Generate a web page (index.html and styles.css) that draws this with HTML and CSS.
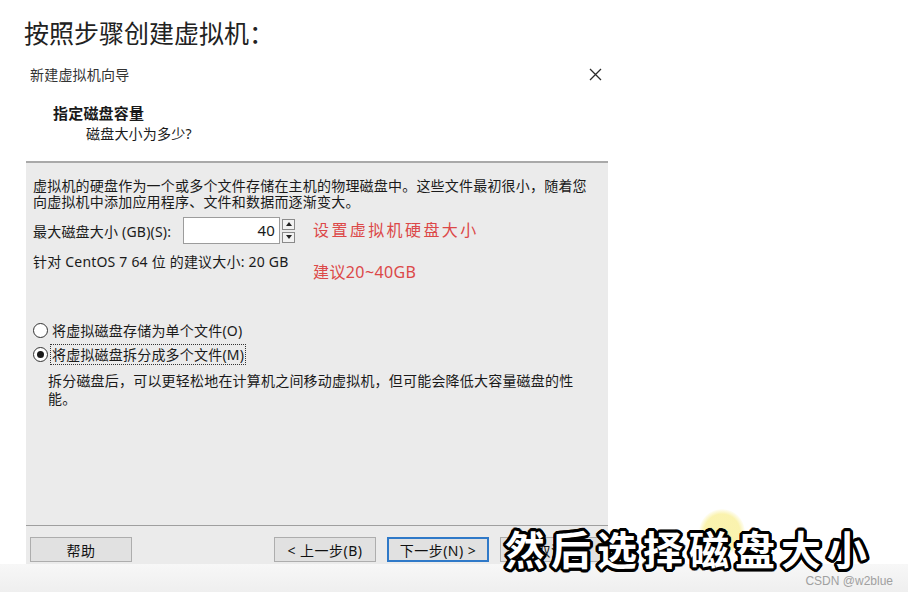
FILE: index.html
```html
<!DOCTYPE html>
<html lang="zh-CN">
    <head>
        <meta charset="utf-8">
        <link rel="stylesheet" href="styles.css">
    </head>
    <body>
        <h1 class="title">按照步骤创建虚拟机：</h1>
        <section class="dialog">
            <header class="head">
                <div class="caption">
                    <span>新建虚拟机向导</span>
                    <svg class="close" width="13" height="13" viewBox="0 0 13 13"><path d="M1 1L12 12M12 1L1 12" stroke="#2b2b2b" stroke-width="1.3" fill="none"/></svg>
                </div>
                <div class="step">指定磁盘容量</div>
                <div class="sub">磁盘大小为多少?</div>
            </header>
            <div class="body">
                <p class="desc">虚拟机的硬盘作为一个或多个文件存储在主机的物理磁盘中。这些文件最初很小，随着您</p>
                <p class="desc">向虚拟机中添加应用程序、文件和数据而逐渐变大。</p>
                <div class="size-row">
                    <label class="size-label">最大磁盘大小 (GB)(S):</label>
                    <div class="num">40</div>
                    <div class="spin">
                        <span class="up"></span>
                        <span class="down"></span>
                    </div>
                </div>
                <p class="hint">针对 CentOS 7 64 位 的建议大小: 20 GB</p>
                <div class="note note-a">设置虚拟机硬盘大小</div>
                <div class="note note-b">建议20~40GB</div>
                <div class="radio first"><span class="dot"></span><span>将虚拟磁盘存储为单个文件(O)</span></div>
                <div class="radio"><span class="dot on"></span><span class="focus">将虚拟磁盘拆分成多个文件(M)</span></div>
                <p class="split">拆分磁盘后，可以更轻松地在计算机之间移动虚拟机，但可能会降低大容量磁盘的性<br>能。</p>
            </div>
            <footer class="foot">
                <button class="btn">帮助</button>
                <div class="nav">
                    <button class="btn">&lt; 上一步(B)</button>
                    <button class="btn primary">下一步(N) &gt;</button>
                    <button class="btn">取消</button>
                </div>
            </footer>
        </section>
        <div class="strip"></div>
        <div class="glow"></div>
        <div class="subtitle">然后选择磁盘大小</div>
        <div class="mark">CSDN @w2blue</div>
    </body>
</html>
```

FILE: styles.css
```css
html,body{
    margin:0;
    padding:0;
    background:#fff;
    font-family:"Noto Sans","Noto Sans CJK SC",sans-serif;
    color:#1a1a1a;
    width:908px;
    height:593px;
    overflow:hidden;
    position:relative;
}
p{
    margin:0;
}
.title{
    margin:0;
    padding:18px 0 0 24px;
    font-family:"Noto Sans CJK SC",sans-serif;
    font-size:25px;
    line-height:28px;
    font-weight:normal;
    letter-spacing:0;
    color:#222;
}
.dialog{
    margin-left:26px;
    width:582px;
    font-size:14px;
    letter-spacing:0.2px;
}
.head{
    height:115px;
    background:#fff;
    border-bottom:2px solid #a9a9a9;
    box-sizing:content-box;
}
.caption{
    display:flex;
    justify-content:space-between;
    align-items:center;
    padding:19px 6px 0 4px;
    line-height:20px;
    color:#333;
}
.close{
    margin-top:-1px;
}
.step{
    margin-top:19px;
    padding-left:27px;
    line-height:18px;
    font-size:15px;
    font-weight:bold;
}
.sub{
    margin-top:3px;
    padding-left:60px;
    line-height:18px;
}
.body{
    position:relative;
    height:362px;
    box-sizing:border-box;
    background:#ebebeb;
    padding:15px 0 0 7px;
}
.desc{
    line-height:16px;
}
.size-row{
    display:flex;
    align-items:center;
    margin-top:7px;
    height:27px;
}
.size-label{
    width:150px;
}
.num{
    width:97px;
    height:27px;
    box-sizing:border-box;
    border:1px solid #9c9c9c;
    background:#fff;
    text-align:right;
    padding-right:4px;
    line-height:25px;
    font-size:15px;
}
.spin{
    display:flex;
    flex-direction:column;
    gap:2px;
    margin-left:2px;
    width:13px;
}
.spin span{
    height:9px;
    border:1px solid #8a8a8a;
    background:#f2f2f2;
    position:relative;
}
.spin span::after{
    content:'';
    position:absolute;
    left:3px;
    width:0;
    height:0;
    border-style:solid;
}
.spin .up::after{
    top:2px;
    border-width:0 3.5px 4px 3.5px;
    border-color:transparent transparent #222 transparent;
}
.spin .down::after{
    top:2px;
    border-width:4px 3.5px 0 3.5px;
    border-color:#222 transparent transparent transparent;
}
.hint{
    margin-top:9px;
    line-height:18px;
}
.note{
    position:absolute;
    left:287px;
    color:#dc4848;
    font-family:"Noto Sans CJK SC",sans-serif;
    font-size:16px;
    letter-spacing:2.4px;
    line-height:20px;
}
.note-a{
    top:56px;
}
.note-b{
    top:99px;
    font-family:"Noto Sans","Noto Sans CJK SC",sans-serif;
    letter-spacing:0.4px;
}
.radio{
    display:flex;
    align-items:center;
    margin-top:2px;
    height:22px;
    gap:4px;
}
.radio.first{
    margin-top:48px;
}
.dot{
    width:13px;
    height:13px;
    border:1px solid #333;
    border-radius:50%;
    background:#fff;
    position:relative;
}
.dot.on::after{
    content:'';
    position:absolute;
    left:3px;
    top:3px;
    width:7px;
    height:7px;
    border-radius:50%;
    background:#1a1a1a;
}
.focus{
    border:1px dotted #333;
    margin-left:-2px;
    padding:0 1px;
    line-height:19px;
}
.split{
    margin-top:7px;
    padding-left:15px;
    line-height:18px;
}
.foot{
    height:39px;
    box-sizing:border-box;
    border-top:1px solid #9f9f9f;
    background:#ebebeb;
    padding:11px 0 0 4px;
    display:flex;
}
.nav{
    display:flex;
    gap:11px;
    margin-left:142px;
}
.btn{
    width:102px;
    height:25px;
    border:1px solid #adadad;
    background:#e1e1e1;
    font-family:inherit;
    font-size:14px;
    color:#111;
    padding:0;
    letter-spacing:0.5px;
}
.primary{
    border:2px solid #2f79c8;
}
.strip{
    height:28px;
    background:linear-gradient(#f7f7f7,#efefef);
}
.glow{
    position:absolute;
    left:699px;
    top:509px;
    width:46px;
    height:46px;
    border-radius:50%;
    background:radial-gradient(circle,rgba(250,242,170,0.95) 55%,rgba(250,242,170,0) 72%);
}
.subtitle{
    position:absolute;
    left:505px;
    top:528px;
    font-family:"Noto Sans CJK SC",sans-serif;
    font-size:40px;
    line-height:40px;
    font-weight:bold;
    letter-spacing:6px;
    color:#fff;
    text-shadow:
        3px 0 0 #000,-3px 0 0 #000,0 3px 0 #000,0 -3px 0 #000,
        2px 2px 0 #000,-2px -2px 0 #000,2px -2px 0 #000,-2px 2px 0 #000,
        3px 1px 0 #000,-3px 1px 0 #000,3px -1px 0 #000,-3px -1px 0 #000,
        1px 3px 0 #000,-1px 3px 0 #000,1px -3px 0 #000,-1px -3px 0 #000;
}
.mark{
    position:absolute;
    right:15px;
    top:574px;
    font-family:"Liberation Sans",Arial,sans-serif;
    font-size:12px;
    line-height:14px;
    color:#a0a0a0;
}
```
